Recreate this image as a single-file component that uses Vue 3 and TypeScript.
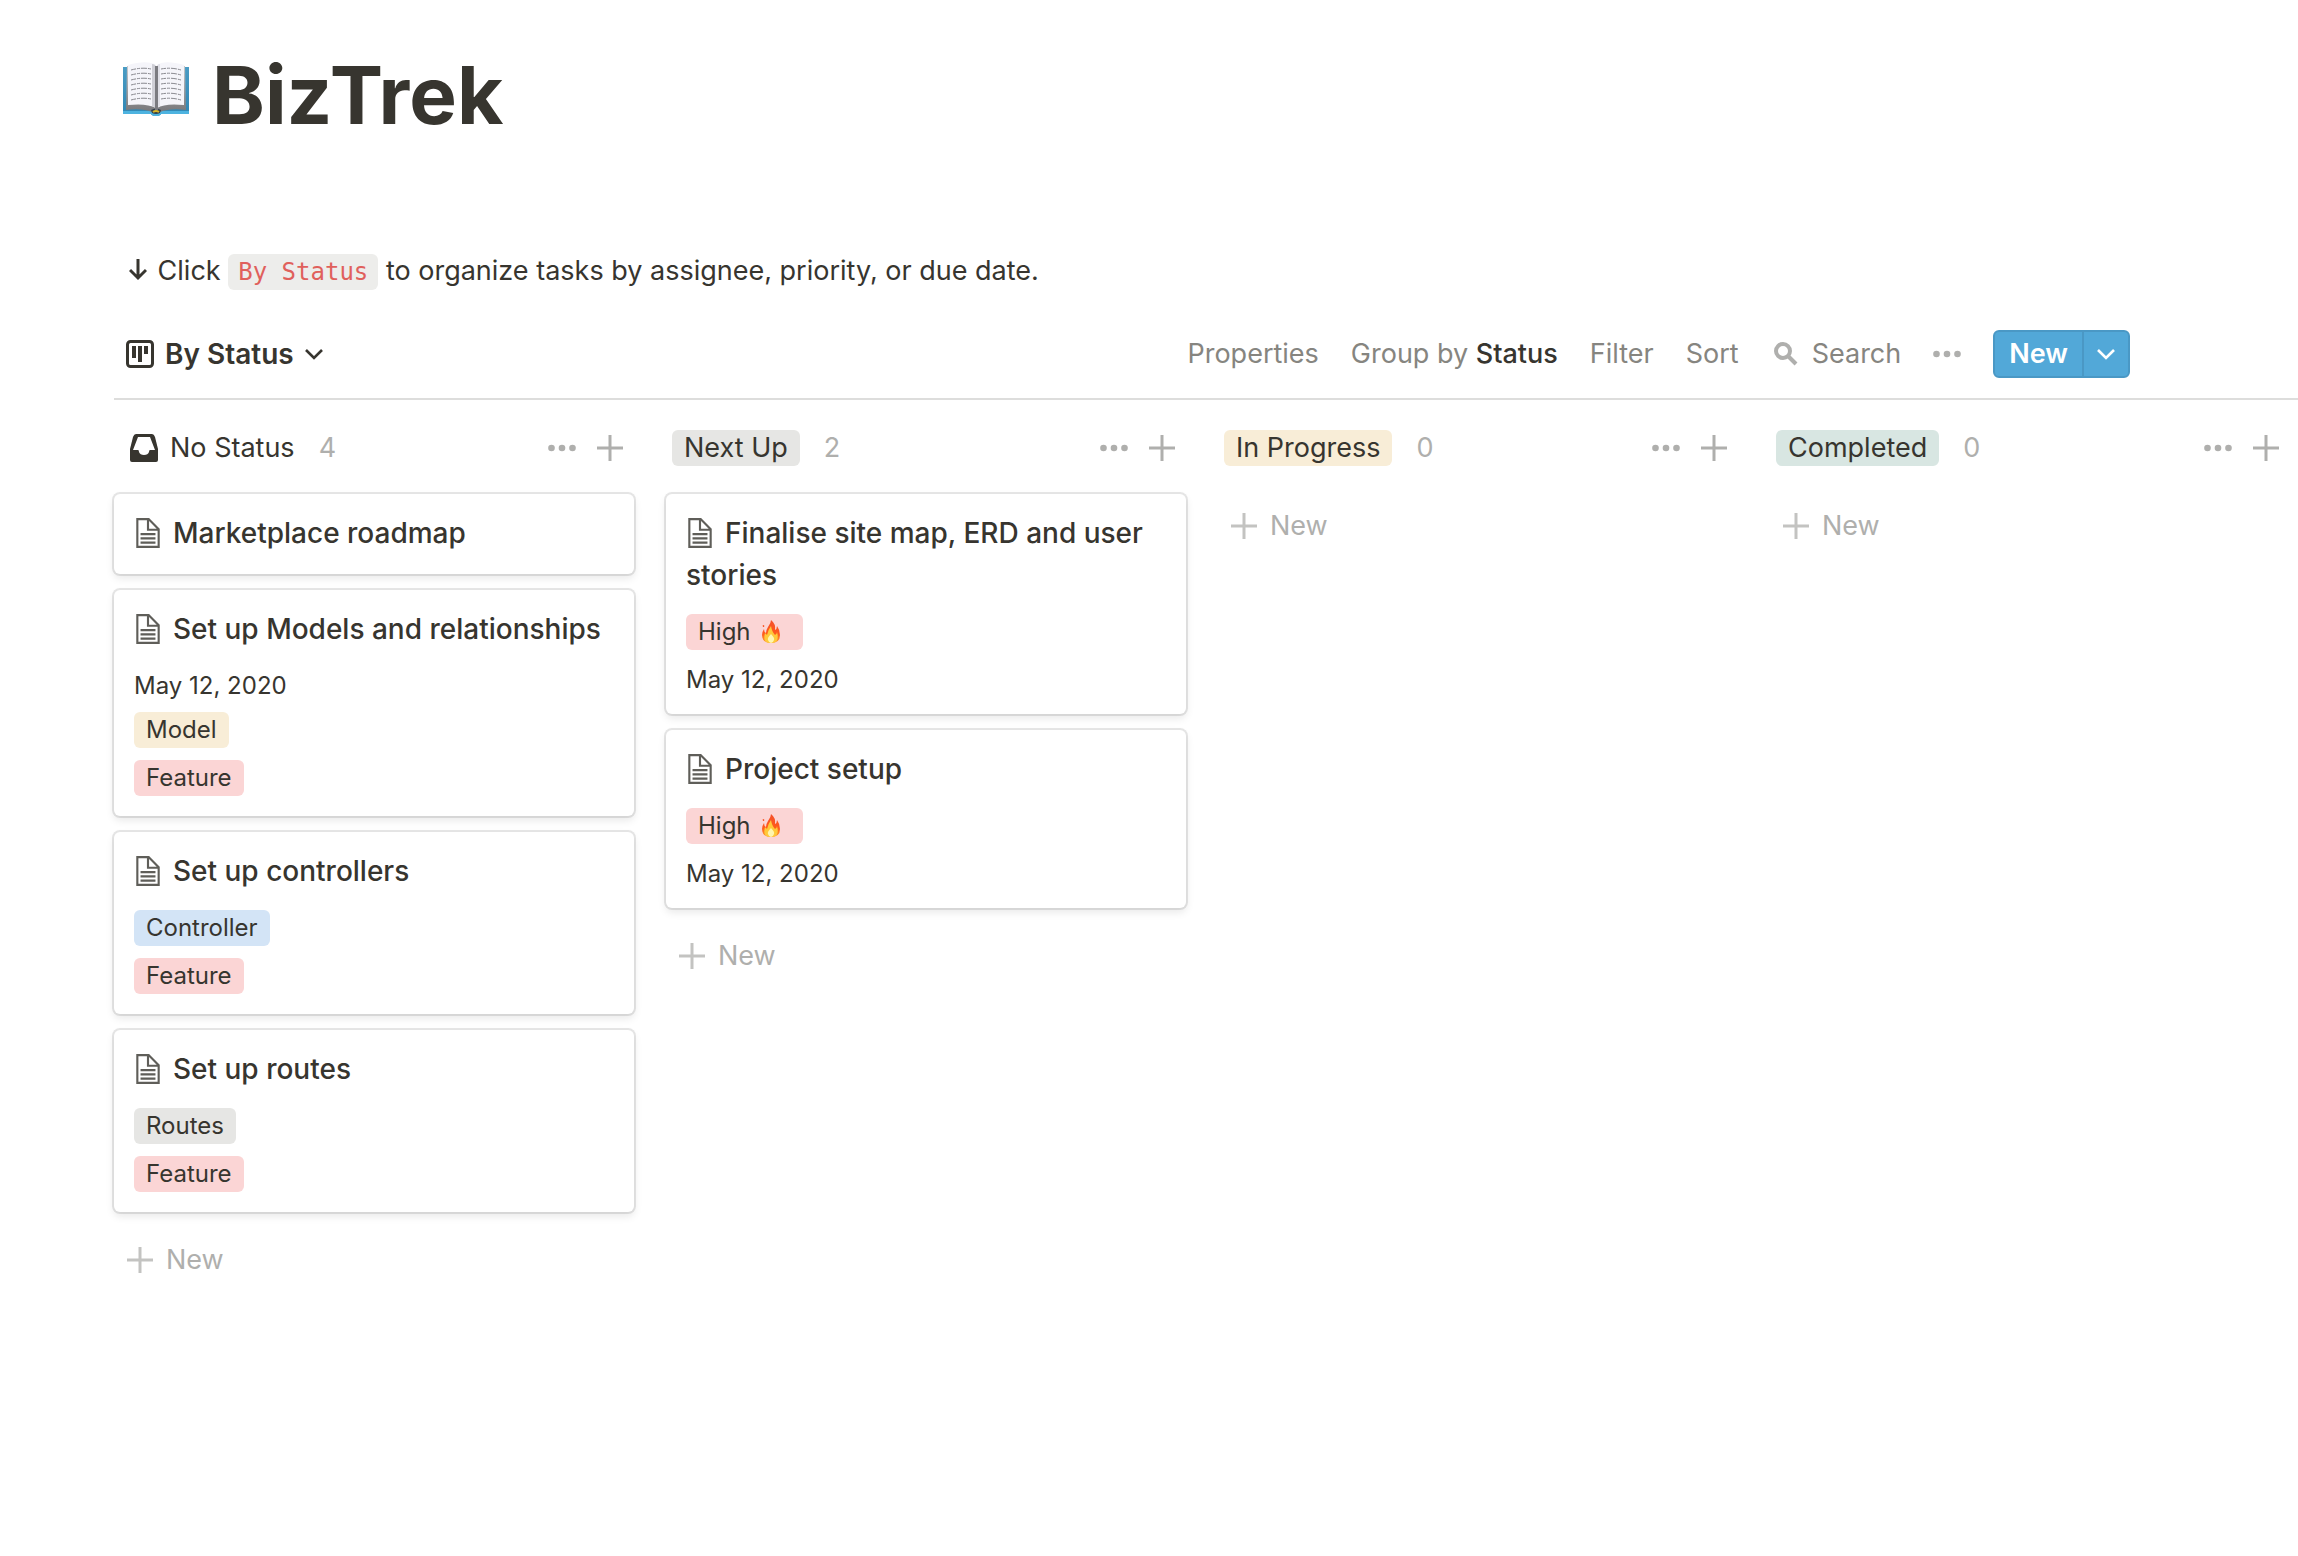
<script setup lang="ts">
type Tone = 'gray' | 'yellow' | 'green' | 'blue' | 'red'

interface Property {
  kind: 'tag' | 'date'
  text: string
  tone?: Tone
  fire?: boolean
}

interface Card {
  title: string
  properties: Property[]
}

interface Column {
  name: string
  tone?: Tone
  cards: Card[]
}

const date: Property = { kind: 'date', text: 'May 12, 2020' }
const feature: Property = { kind: 'tag', text: 'Feature', tone: 'red' }
const high: Property = { kind: 'tag', text: 'High', tone: 'red', fire: true }

const columns: Column[] = [
  {
    name: 'No Status',
    cards: [
      { title: 'Marketplace roadmap', properties: [] },
      {
        title: 'Set up Models and relationships',
        properties: [date, { kind: 'tag', text: 'Model', tone: 'yellow' }, feature],
      },
      {
        title: 'Set up controllers',
        properties: [{ kind: 'tag', text: 'Controller', tone: 'blue' }, feature],
      },
      {
        title: 'Set up routes',
        properties: [{ kind: 'tag', text: 'Routes', tone: 'gray' }, feature],
      },
    ],
  },
  {
    name: 'Next Up',
    tone: 'gray',
    cards: [
      { title: 'Finalise site map, ERD and user stories', properties: [high, date] },
      { title: 'Project setup', properties: [high, date] },
    ],
  },
  { name: 'In Progress', tone: 'yellow', cards: [] },
  { name: 'Completed', tone: 'green', cards: [] },
]

const bookLines = [12, 17, 22, 27, 32, 37, 42]
</script>

<template>
  <main class="page">
    <h1 class="title">
      <svg class="book" viewBox="0 0 66 54" aria-hidden="true">
        <defs>
          <linearGradient id="cover" x1="0" y1="0" x2="0" y2="1">
            <stop offset="0" stop-color="#4a9cc4" />
            <stop offset="1" stop-color="#2f86b4" />
          </linearGradient>
          <linearGradient id="edge" x1="0" y1="0" x2="0" y2="1">
            <stop offset="0" stop-color="#c9c9cc" />
            <stop offset="1" stop-color="#77777a" />
          </linearGradient>
        </defs>
        <path d="M0 5h66v47H38q-1 2-5 2t-5-2H0z" fill="url(#cover)" />
        <path d="M0 49h66v3H38q-1 2-5 2t-5-2H0z" fill="#4db3e0" />
        <path d="M4 4h58l1 44q-16-2-26 2h-8Q19 46 3 48z" fill="url(#edge)" />
        <path d="M28 48q5-3 10 0l-1 3q-4 2-8 0z" fill="#34404a" />
        <path d="M30 50q3-2 6 0" fill="none" stroke="#d5b526" stroke-width="2" />
        <path d="M5 3Q22-2 32 2q1 1 1 3v41Q24 41 5 43z" fill="#f5f5fa" />
        <path d="M61 3Q44-2 35 2q-1 1-1 3v41q8-5 27-3z" fill="#f5f5fa" />
        <path d="M29 2q4 0 4 4v40l-4-2z" fill="#cfcfd6" />
        <path d="M37 2q-3 0-4 4v40l4-2z" fill="#e1e1e8" />
        <path d="M32 4h3v44h-3z" fill="#7b7b80" />
        <g fill="none" stroke="#8a8a90" stroke-width="1" stroke-dasharray="5 1 3 1 6 1">
          <path v-for="y in bookLines" :key="y" :d="`M8 ${y - 4}q11-3 20-1M38 ${y - 5}q10-2 20 1`" />
        </g>
      </svg>
      BizTrek
    </h1>

    <p class="hint">
      <svg class="arrow" viewBox="0 0 18 22" aria-hidden="true">
        <path d="M9 0v19M1 11l8 8 8-8" fill="none" stroke="currentColor" stroke-width="3" />
      </svg>
      Click <code>By Status</code> to organize tasks by assignee, priority, or due date.
    </p>

    <div class="toolbar">
      <button class="view" type="button">
        <svg width="28" height="28" viewBox="0 0 28 28" aria-hidden="true">
          <rect x="1.5" y="1.5" width="25" height="25" rx="3" fill="none" stroke="currentColor" stroke-width="3" />
          <path d="M6 6h4v12H6zM12 6h4v16h-4zM18 6h4v8h-4z" fill="currentColor" />
        </svg>
        <span>By Status</span>
        <svg class="chevron" viewBox="0 0 18 12" aria-hidden="true">
          <path d="M1 2l8 8 8-8" fill="none" stroke="currentColor" stroke-width="2.6" />
        </svg>
      </button>
      <div class="actions">
        <button type="button">Properties</button>
        <button type="button">Group by <span class="value">Status</span></button>
        <button type="button">Filter</button>
        <button type="button">Sort</button>
        <button class="search" type="button">
          <svg width="24" height="24" viewBox="0 0 24 24" aria-hidden="true">
            <g fill="none" stroke="#afafad" stroke-width="4">
              <circle cx="9" cy="9" r="7" />
              <path d="M14 14l8 8" />
            </g>
          </svg>
          Search
        </button>
        <button class="icon" type="button" aria-label="More options">
          <svg width="28" height="8" viewBox="0 0 28 8" aria-hidden="true">
            <g fill="currentColor">
              <circle cx="3.5" cy="4" r="3.3" /><circle cx="14" cy="4" r="3.3" /><circle cx="24.5" cy="4" r="3.3" />
            </g>
          </svg>
        </button>
        <div class="split">
          <button class="create" type="button">New</button>
          <button class="drop" type="button" aria-label="Templates">
            <svg class="chevron" viewBox="0 0 18 12" aria-hidden="true">
              <path d="M1 2l8 8 8-8" fill="none" stroke="currentColor" stroke-width="2.6" />
            </svg>
          </button>
        </div>
      </div>
    </div>

    <div class="board">
      <section v-for="column in columns" :key="column.name" class="column">
        <header class="head">
          <h2 v-if="column.tone" class="label" :class="column.tone">{{ column.name }}</h2>
          <h2 v-else class="plain">
            <svg width="28" height="28" viewBox="0 0 28 28" aria-hidden="true">
              <path
                fill-rule="evenodd"
                d="M6 0h16q2 0 3 3l3 12v11q0 2-2 2H2q-2 0-2-2V15L3 3Q4 0 6 0zM8 3L3 16h5q1 0 1 2 1 3 5 3t5-3q0-2 1-2h5L20 3z"
                fill="currentColor"
              />
            </svg>
            {{ column.name }}
          </h2>
          <span class="count">{{ column.cards.length }}</span>
          <button class="icon more" type="button" aria-label="Column options">
            <svg width="28" height="8" viewBox="0 0 28 8" aria-hidden="true">
              <g fill="currentColor">
                <circle cx="3.5" cy="4" r="3.3" /><circle cx="14" cy="4" r="3.3" /><circle cx="24.5" cy="4" r="3.3" />
              </g>
            </svg>
          </button>
          <button class="icon" type="button" aria-label="Add a card">
            <svg width="26" height="26" viewBox="0 0 26 26" aria-hidden="true">
              <path d="M13 0v26M0 13h26" stroke="currentColor" stroke-width="3" />
            </svg>
          </button>
        </header>

        <article v-for="card in column.cards" :key="card.title" class="card">
          <h3>
            <svg class="doc" viewBox="0 0 30 30" aria-hidden="true">
              <path
                fill="currentColor"
                d="M16,1H4v28h22V11L16,1z M16,3.828L23.172,11H16V3.828z M24,27H6V3h8v10h10V27z M8,17h14v-2H8V17z M8,21h14v-2H8V21z M8,25h14v-2H8V25z"
              />
            </svg>{{ card.title }}
          </h3>
          <div v-if="card.properties.length" class="properties">
            <template v-for="property in card.properties" :key="property.text">
              <span v-if="property.kind === 'tag'" class="tag" :class="[property.tone, { hot: property.fire }]">
                {{ property.text }}
                <svg v-if="property.fire" width="20" height="24" viewBox="0 0 20 24" role="img" aria-label="fire">
                  <defs>
                    <linearGradient id="flame" x1="0" y1="0" x2="0" y2="1">
                      <stop offset="0" stop-color="#f4512c" />
                      <stop offset=".6" stop-color="#ff5a1c" />
                      <stop offset="1" stop-color="#ffa52b" />
                    </linearGradient>
                  </defs>
                  <path
                    d="M10 0q5 4 4 10 2-1 2-4 3 4 3 9 0 8-9 8-9 0-9-8 0-3 2-6 0 3 2 4 0-3 2-6 3-4 3-7zM2 5q2 0 1 2-2 0-1-2z"
                    fill="url(#flame)"
                  />
                  <path d="M10 6q1 6 4 9 2-1 2-3 3 11-6 11T4 13l2 2q1-5 4-9z" fill="#ffc93a" />
                  <path d="M10 14q4 4 3 6-1 3-3 3t-3-3q-1-2 3-6z" fill="#fff6b0" />
                </svg>
              </span>
              <time v-else class="date" datetime="2020-05-12">{{ property.text }}</time>
            </template>
          </div>
        </article>

        <button class="add" type="button">
          <svg width="26" height="26" viewBox="0 0 26 26" aria-hidden="true">
            <path d="M13 0v26M0 13h26" stroke="#c3c3c1" stroke-width="3" />
          </svg>
          New
        </button>
      </section>
    </div>
  </main>
</template>

<style>
body {
  margin: 0;
  background: #fff;
}
</style>

<style scoped>
.page {
  padding-top: 47px;
  color: #37352f;
  font: 27px/42px Inter, "Liberation Sans", sans-serif;
}

h1,
h2,
h3,
p {
  margin: 0;
}

svg {
  display: block;
  flex: none;
}

button {
  margin: 0;
  padding: 0;
  border: 0;
  background: none;
  color: inherit;
  font: inherit;
  cursor: pointer;
}

.title {
  display: flex;
  align-items: center;
  gap: 23px;
  padding-left: 123px;
  font-size: 80px;
  font-weight: 700;
  line-height: 96px;
}

.book {
  width: 66px;
  height: 54px;
  margin-bottom: 12px;
}

.hint {
  margin: 107px 0 18px;
  padding-left: 129px;
}

.arrow {
  display: inline-block;
  width: 18px;
  height: 22px;
  margin-right: 3px;
  vertical-align: -1px;
}

code {
  padding: 4px 10px;
  border-radius: 6px;
  background: #ededeb;
  color: #e0605c;
  font: 24px/28px "DejaVu Sans Mono", "Liberation Mono", monospace;
}

.toolbar {
  display: flex;
  align-items: center;
  justify-content: space-between;
  box-sizing: border-box;
  height: 90px;
  margin-left: 114px;
  padding: 0 168px 0 12px;
  border-bottom: 2px solid #dddddc;
}

.view {
  display: flex;
  align-items: center;
  gap: 11px;
  font-size: 28px;
  font-weight: 600;
}

.chevron {
  width: 18px;
  height: 12px;
}

.actions {
  display: flex;
  align-items: center;
  gap: 32px;
  color: #868580;
}

.value {
  color: #37352f;
  font-weight: 500;
}

.search {
  display: flex;
  align-items: center;
  gap: 14px;
  padding-left: 3px;
}

.icon {
  color: #afafad;
}

.split {
  display: flex;
  box-sizing: border-box;
  height: 48px;
  border: 2px solid #4a98c5;
  border-radius: 6px;
  background: #52a8d8;
  color: #fff;
}

.create {
  padding: 0 14px;
  font-weight: 600;
}

.drop {
  padding: 0 13px;
  border-left: 2px solid #4a98c5;
}

.board {
  display: flex;
  gap: 32px;
  padding-left: 114px;
}

.column {
  flex: 0 0 520px;
}

.head {
  display: flex;
  align-items: center;
  height: 92px;
  padding: 2px 11px 0 6px;
}

.label,
.plain {
  font-size: 27px;
  font-weight: 400;
}

.label {
  padding: 0 12px;
  border-radius: 6px;
  line-height: 36px;
}

.plain {
  display: flex;
  align-items: center;
  gap: 12px;
  padding-left: 10px;
}

.count {
  margin-left: 24px;
  color: #afafad;
}

.more {
  margin: 0 21px 0 auto;
}

.card {
  margin-bottom: 16px;
  padding: 18px 20px 8px;
  border-radius: 6px;
  background: #fff;
  box-shadow: 0 0 0 2px rgba(15, 15, 15, 0.1), 0 4px 8px rgba(15, 15, 15, 0.1);
}

.card h3 {
  margin-bottom: 12px;
  font-size: 28px;
  font-weight: 500;
  line-height: 42px;
}

.doc {
  display: inline-block;
  width: 32px;
  height: 32px;
  margin: 0 9px 0 -2px;
  color: #5f5e59;
  vertical-align: -6px;
}

.properties {
  display: flex;
  flex-direction: column;
  align-items: flex-start;
  padding-top: 6px;
  font-size: 24px;
  line-height: 36px;
}

.tag {
  display: flex;
  align-items: center;
  gap: 10px;
  margin-bottom: 12px;
  padding: 0 12px;
  border-radius: 6px;
}

.hot {
  padding-right: 22px;
}

.date {
  margin-bottom: 8px;
}

.gray {
  background: #e6e6e4;
}

.yellow {
  background: #f8edd7;
}

.green {
  background: #d8e6e2;
}

.blue {
  background: #d3e4f6;
}

.red {
  background: #fbd5d5;
}

.add {
  display: flex;
  align-items: center;
  gap: 13px;
  width: 100%;
  height: 64px;
  padding-left: 13px;
  color: #afafad;
}
</style>
